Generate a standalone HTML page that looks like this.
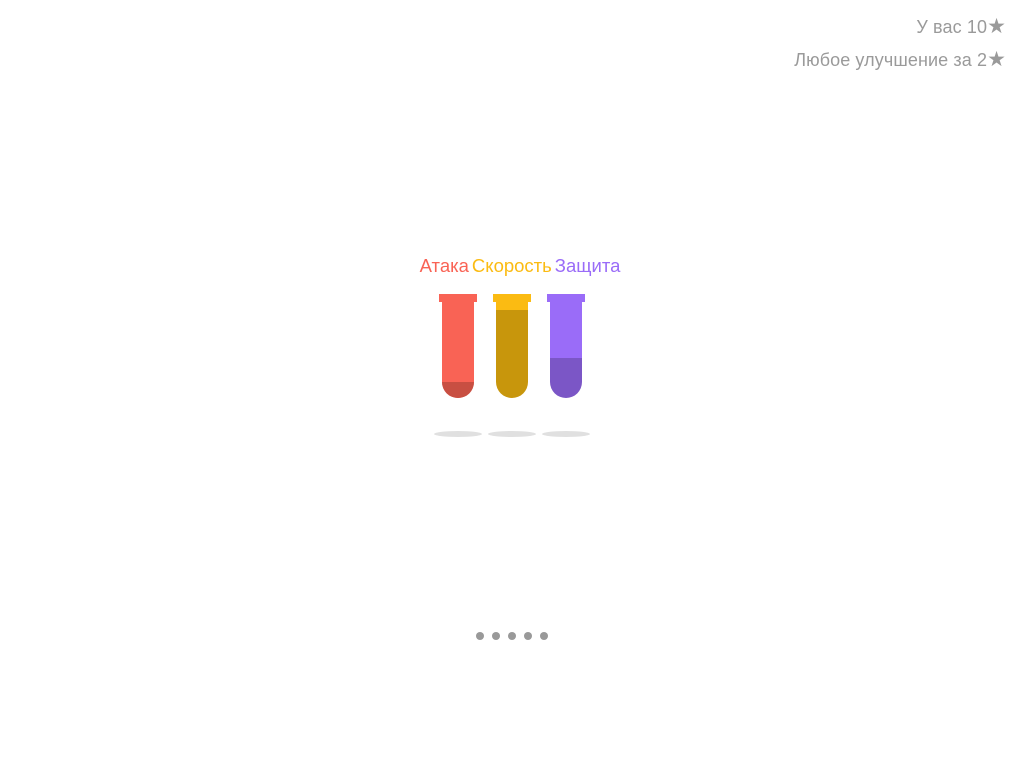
<!DOCTYPE html>
<html><head><meta charset="utf-8"><style>
body{margin:0;width:1024px;height:768px;background:#fff;position:relative;overflow:hidden;font-family:"Liberation Sans",sans-serif}
.t{position:absolute;right:18px;color:#9a9a9a;font-size:18px;letter-spacing:0.1px;white-space:nowrap}
.t b{font-weight:normal;font-size:21px}
.lab{position:absolute;top:255px;left:8px;width:1024px;text-align:center;font-size:18.5px;white-space:nowrap}
.lab span{margin:0 1.5px}
.d{position:absolute;top:632px;width:8px;height:8px;border-radius:50%;background:#999}
.sh{position:absolute;top:431px;width:48px;height:6px;border-radius:50%;background:#e0e0e0}
</style></head><body>
<div class="t" style="top:14px">У вас 10<b>★</b></div>
<div class="t" style="top:47px">Любое улучшение за 2<b>★</b></div>
<div class="lab"><span style="color:#f96355">Атака</span><span style="color:#fbbb12">Скорость</span><span style="color:#9a6cf8">Защита</span></div>
<svg style="position:absolute;left:0;top:0" width="1024" height="768">
<rect x="439" y="294" width="38" height="8" fill="#f96355"/>
<path d="M442 302H474V382A16 16 0 0 1 442 382Z" fill="#f96355"/>
<path d="M442 382H474A16 16 0 0 1 442 382Z" fill="#c84f42"/>
<rect x="493" y="294" width="38" height="8" fill="#fbbb12"/>
<rect x="496" y="302" width="32" height="8" fill="#fbbb12"/>
<path d="M496 310H528V382A16 16 0 0 1 496 382Z" fill="#c8960c"/>
<rect x="547" y="294" width="38" height="8" fill="#9a6cf8"/>
<rect x="550" y="302" width="32" height="56" fill="#9a6cf8"/>
<path d="M550 358H582V382A16 16 0 0 1 550 382Z" fill="#7b56c6"/>
</svg>
<div class="sh" style="left:434px"></div><div class="sh" style="left:488px"></div><div class="sh" style="left:542px"></div>
<div class="d" style="left:476px"></div><div class="d" style="left:492px"></div><div class="d" style="left:508px"></div><div class="d" style="left:524px"></div><div class="d" style="left:540px"></div>
</body></html>
